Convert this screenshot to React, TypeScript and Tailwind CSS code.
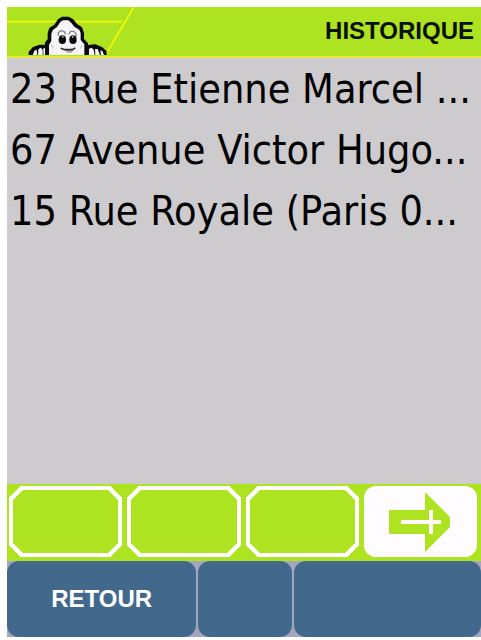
type Address = { id: number; label: string };

const addresses: Address[] = [
  { id: 1, label: "23 Rue Etienne Marcel ..." },
  { id: 2, label: "67 Avenue Victor Hugo..." },
  { id: 3, label: "15 Rue Royale (Paris 0..." },
];

const slots = ["Option 1", "Option 2", "Option 3"];

function Mascot() {
  return (
    <svg
      viewBox="21 21 384 147"
      className="h-[49px] w-32 shrink-0"
      aria-hidden="true"
    >
      <path d="M21 65H366M402 21L318 162" fill="none" stroke="#f4fa08" strokeWidth="5" />
      {/* hands */}
      <path
        d="M86 165V155L99 141L118 134H138L158 146V165ZM245 165V147L263 135L286 133L306 141L320 154V165Z"
        fill="#080a0c"
      />
      <path
        d="M98 165L104 151L110 150L112 165ZM114 165L115 148L122 143L128 149V165ZM130 165V145L138 144L144 151V165ZM147 165V151L153 154V165ZM250 165V150L258 146L264 151V165ZM267 165V146L275 143L281 149L284 165ZM286 165L285 147L293 147L300 165ZM303 165L301 151L307 153L312 165Z"
        fill="#f5f5f7"
      />
      {/* head */}
      <path
        d="M135 165V127L143 118V99L148 84L163 74L174 58L186 50H206L220 58L231 72L246 82L252 98V117L264 130V165Z"
        fill="#080a0c"
      />
      <path
        d="M147 165V134L154 123V101L159 89L171 81L181 66L189 61H205L214 69L224 81L238 89L242 100V120L253 133V165Z"
        fill="#f5f5f7"
      />
      <path
        d="M175 108V98L182 92L192 94L197 103M206 103L212 94L222 94L228 102V110"
        fill="none"
        stroke="#85858b"
        strokeWidth="4"
      />
      <ellipse cx="187" cy="119" rx="11" ry="13" fill="#080a0c" />
      <ellipse cx="219" cy="119" rx="11" ry="13" fill="#080a0c" />
      <circle cx="188" cy="110" r="3" fill="#b0b0b6" />
      <circle cx="218" cy="110" r="3" fill="#b0b0b6" />
      <path d="M194 149L200 158H214L224 147" fill="#a5a5ab" />
      <path d="M182 145L194 149H216L226 144" fill="none" stroke="#2b2d31" strokeWidth="5" />
      <path d="M154 134L160 144M246 136L241 145" stroke="#c9c9ce" strokeWidth="4" />
    </svg>
  );
}

function ArrowIcon() {
  return (
    <svg viewBox="0 0 62 60" className="h-[60px] w-[62px]" aria-hidden="true">
      <path d="M0 18H36V0L61 25V35L36 60V42H0Z" fill="#ade321" />
      <path d="M12 30H52M42 18V42" stroke="#fffcff" strokeWidth="4" />
    </svg>
  );
}

export default function App() {
  return (
    <div className="bg-white pt-[7px] pb-[2px] pl-[7px] font-['Liberation_Sans',Arial,sans-serif]">
      <header className="flex items-start justify-between border-b-2 border-[#e8e637] bg-[#ade321]">
        <Mascot />
        <h1 className="pt-2 pr-[7px] text-[24px] leading-8 font-bold text-[#081000]">
          HISTORIQUE
        </h1>
      </header>

      <main className="min-h-[426px] bg-[#cecbce] pt-px">
        <ul>
          {addresses.map((a) => (
            <li key={a.id}>
              <button
                type="button"
                className="block h-[61px] w-full overflow-hidden pl-[3px] text-left font-['DejaVu_Sans_Condensed','DejaVu_Sans',sans-serif] text-[41px] leading-[61px] whitespace-nowrap text-black"
              >
                {a.label}
              </button>
            </li>
          ))}
        </ul>
      </main>

      <div className="grid grid-cols-4 gap-[5px] bg-[#ade321] pt-[2px] pr-1 pb-1 pl-[2px]">
        {slots.map((name) => (
          <button
            key={name}
            type="button"
            aria-label={name}
            className="h-[71px] rounded-[12px] border-4 border-white [corner-shape:bevel]"
          />
        ))}
        <button
          type="button"
          aria-label="Suivant"
          className="flex h-[71px] items-center justify-center rounded-[12px] bg-[#fffcff]"
        >
          <ArrowIcon />
        </button>
      </div>

      <nav className="grid grid-cols-[190fr_94fr_188fr] gap-[2px] bg-[#a5a6bd]">
        <button
          type="button"
          className="h-[76px] rounded-[12px] bg-[#42698c] text-[24px] font-bold text-white"
        >
          RETOUR
        </button>
        <button type="button" aria-label="Menu" className="h-[76px] rounded-[12px] bg-[#42698c]" />
        <button type="button" aria-label="Valider" className="h-[76px] rounded-[12px] bg-[#42698c]" />
      </nav>
    </div>
  );
}
